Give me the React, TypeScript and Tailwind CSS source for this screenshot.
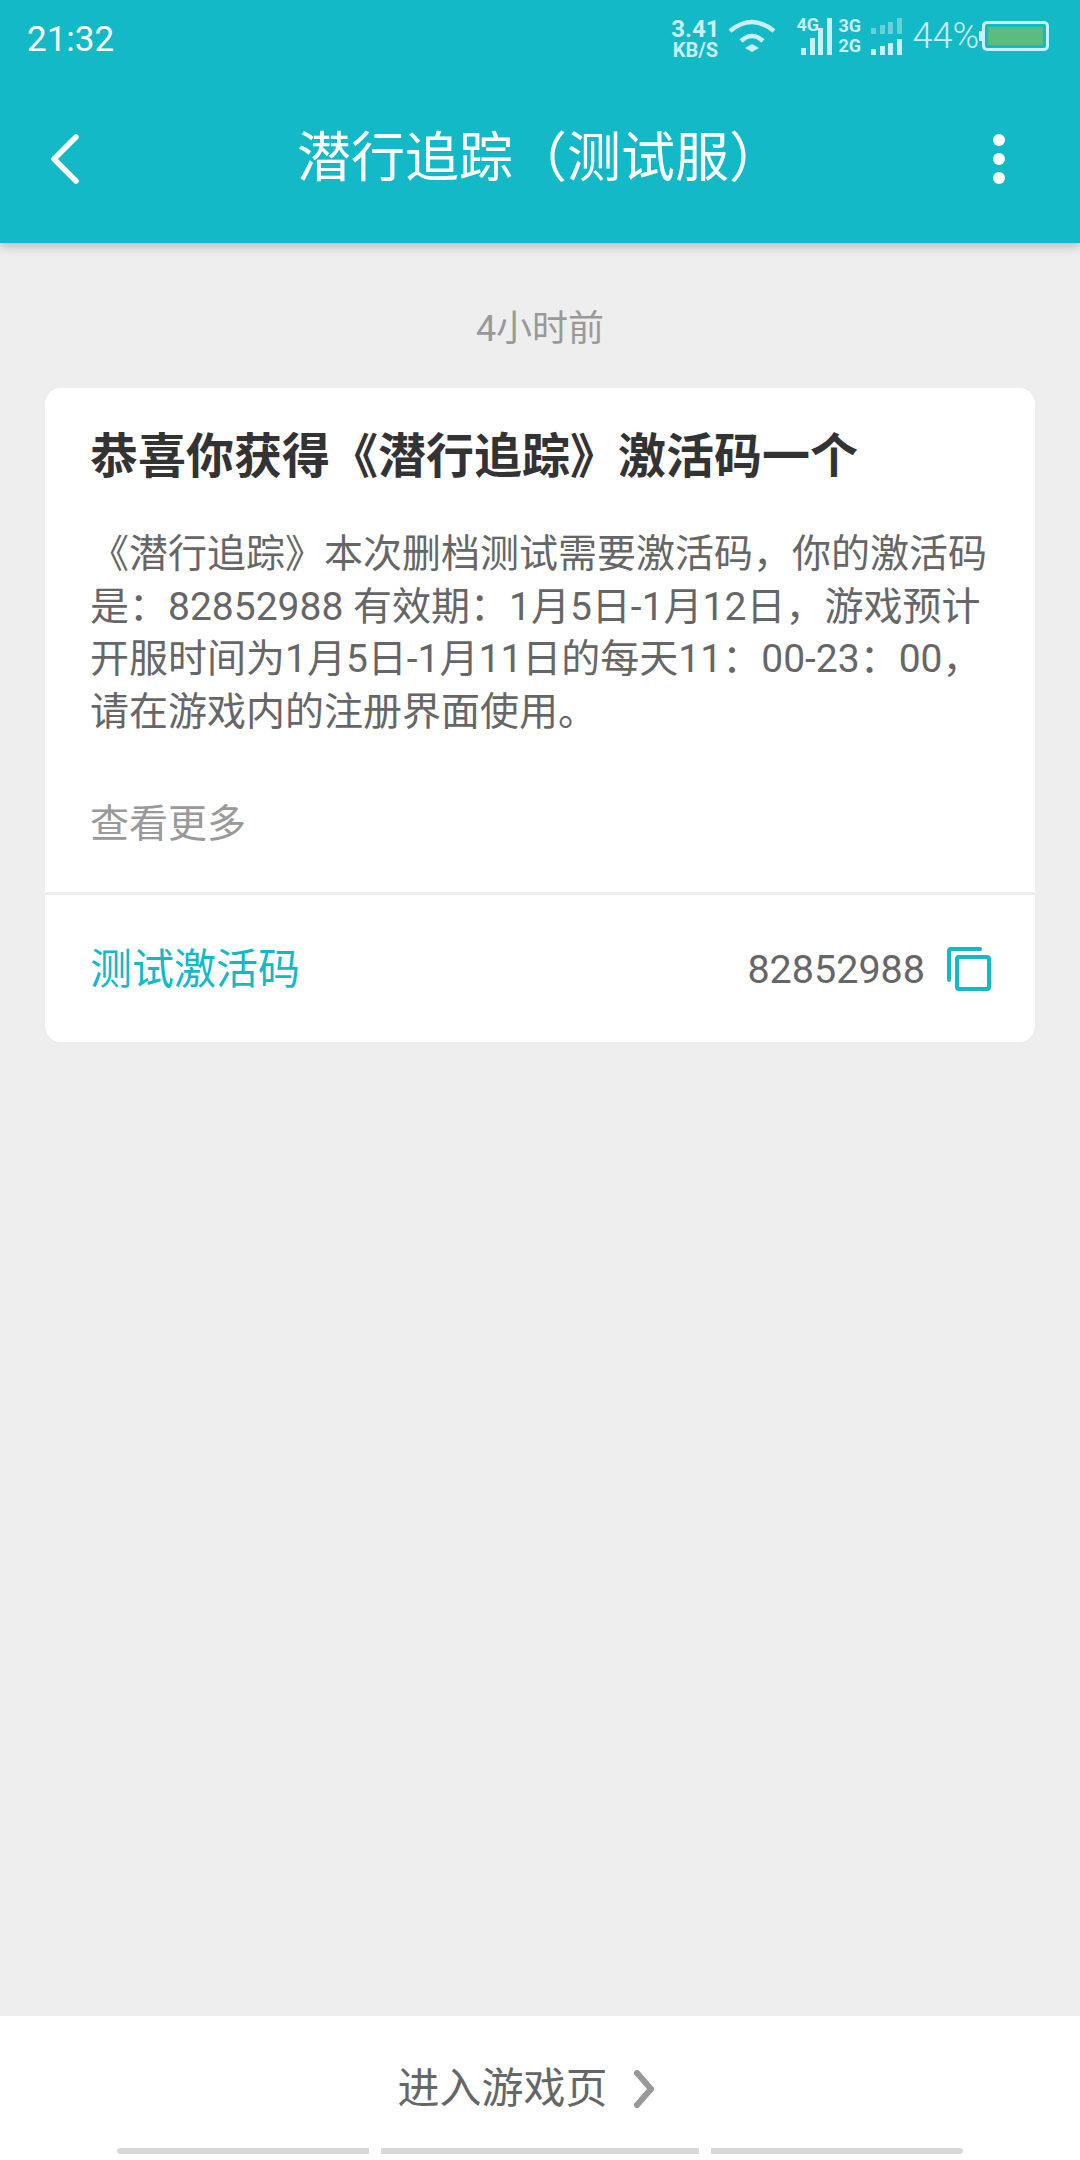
const StatusBar = () => (
  <div className="flex h-[72px] items-center justify-between pl-[27px] pr-[31px] text-white">
    <span className="text-[35px] leading-none pt-[6px]">21:32</span>
    <div className="flex items-center text-[#c9f0f4]">
      <div className="flex w-[50px] flex-col items-center pt-[6px] font-bold">
        <span className="text-[24px] leading-[22px]">3.41</span>
        <span className="text-[20px] leading-[20px]">KB/S</span>
      </div>
      <svg className="ml-[8px] h-[34px] w-[48px]" viewBox="0 0 48 34" fill="none" stroke="#c9f0f4" strokeWidth="4.5">
        <path d="M2 12 Q24 -6 46 12" />
        <path d="M13 22 Q24 12 35 22" />
        <path d="M17 29 L24 25 L31 29 L24 33 Z" fill="#c9f0f4" stroke="none" />
      </svg>
      <div className="relative ml-[20px] h-[38px] w-[36px]">
        <span className="absolute left-0 top-0 text-[18px] leading-[16px] font-bold">4G</span>
        <svg className="absolute bottom-0 right-0 h-[37px] w-[31px]" viewBox="0 0 31 37" fill="#c9f0f4">
          <rect x="0" y="30" width="5" height="7" />
          <rect x="9" y="20" width="5" height="17" />
          <rect x="17" y="10" width="5" height="27" />
          <rect x="26" y="0" width="5" height="37" />
        </svg>
      </div>
      <div className="ml-[6px] flex w-[22px] flex-col text-[18px] font-bold leading-[20px]">
        <span>3G</span>
        <span>2G</span>
      </div>
      <svg className="ml-[11px] h-[37px] w-[31px]" viewBox="0 0 31 37">
        <g fill="#c9f0f4" opacity="0.45">
          <rect x="0" y="10" width="5" height="6" />
          <rect x="9" y="7" width="5" height="9" />
          <rect x="17" y="4" width="5" height="12" />
          <rect x="26" y="0" width="5" height="16" />
        </g>
        <g fill="#c9f0f4">
          <rect x="0" y="31" width="5" height="6" />
          <rect x="9" y="28" width="5" height="9" />
          <rect x="17" y="25" width="5" height="12" />
          <rect x="26" y="21" width="5" height="16" />
        </g>
      </svg>
      <span className="ml-[10px] text-[36px] leading-none font-light">44%</span>
      <div className="flex items-center">
        <div className="h-[10px] w-[3px] bg-[#c9f0f4]" />
        <div className="h-[30px] w-[67px] rounded-[5px] border-[3px] border-[#c9f0f4] p-[3px]">
          <div className="h-full w-full bg-[#5abd7d]" />
        </div>
      </div>
    </div>
  </div>
);

const CopyIcon = () => (
  <svg className="h-[44px] w-[44px]" viewBox="0 0 44 44" fill="none" stroke="#14b9c8" strokeWidth="4">
    <path d="M2 33 V4 Q2 2 4 2 H33" strokeLinecap="round" />
    <rect x="10" y="10" width="32" height="32" rx="2" />
  </svg>
);

export default function App() {
  return (
    <div
      className="flex h-[2160px] w-[1080px] flex-col bg-[#eeeeee]"
      style={{ fontFamily: 'Roboto, "Noto Sans CJK SC", sans-serif' }}
    >
      <header className="z-10 h-[243px] shrink-0 bg-[#14b9c8] shadow-[0_3px_10px_rgba(0,0,0,0.25)]">
        <StatusBar />
        <div className="flex h-[171px] items-center justify-between pt-[2px] text-white">
          <svg className="ml-[48px] h-[54px] w-[34px]" viewBox="0 0 34 54" fill="none" stroke="white" strokeWidth="5.5" strokeLinecap="round" strokeLinejoin="round">
            <path d="M28 5 L6 27 L28 49" />
          </svg>
          <h1 className="ml-[21px] text-[54px] font-normal leading-none">潜行追踪（测试服）</h1>
          <div className="mr-[59px] flex w-[44px] flex-col items-center gap-[7px]">
            <span className="h-[12px] w-[12px] rounded-full bg-white" />
            <span className="h-[12px] w-[12px] rounded-full bg-white" />
            <span className="h-[12px] w-[12px] rounded-full bg-white" />
          </div>
        </div>
      </header>

      <main className="flex-1 px-[45px]">
        <p className="pt-[65px] pb-[38px] text-center text-[36px] leading-[42px] text-[#999999]">4小时前</p>
        <div className="rounded-[16px] bg-white">
          <div className="px-[45px] pt-[39px]">
            <h2 className="text-[48px] font-bold leading-[60px] text-[#333333]">恭喜你获得《潜行追踪》激活码一个</h2>
            <p className="mt-[41px] text-[39px] leading-[52.6px] text-[#666666]">
              《潜行追踪》本次删档测试需要激活码，你的激活码是：82852988 有效期：1月5日-1月12日，游戏预计开服时间为1月5日-1月11日的每天11：00-23：00，请在游戏内的注册界面使用。
            </p>
            <p className="mt-[60px] pb-[42px] text-[39px] leading-[52px] text-[#999999]">查看更多</p>
          </div>
          <div className="flex h-[150px] items-center justify-between border-t-[3px] border-[#eeeeee] pl-[45px] pr-[44px]">
            <span className="pt-[2px] text-[42px] text-[#14b9c8]">测试激活码</span>
            <div className="flex items-center gap-[22px]">
              <span className="pt-[2px] text-[39.5px] text-[#666666]">82852988</span>
              <CopyIcon />
            </div>
          </div>
        </div>
      </main>

      <footer className="h-[144px] shrink-0 bg-white">
        <div className="flex h-[132px] items-center justify-center pt-[14px] pr-[28px] text-[#666666]">
          <span className="text-[42px] leading-none">进入游戏页</span>
          <svg className="ml-[25px] h-[38px] w-[22px]" viewBox="0 0 22 38" fill="none" stroke="#999999" strokeWidth="6" strokeLinecap="round" strokeLinejoin="round">
            <path d="M4 3 L18 19 L4 35" />
          </svg>
        </div>
        <div className="flex justify-center gap-[12px]">
          <div className="h-[6px] w-[252px] rounded-l-full bg-[#d8d8d8]" />
          <div className="h-[6px] w-[318px] bg-[#d8d8d8]" />
          <div className="h-[6px] w-[252px] rounded-r-full bg-[#d8d8d8]" />
        </div>
      </footer>
    </div>
  );
}
